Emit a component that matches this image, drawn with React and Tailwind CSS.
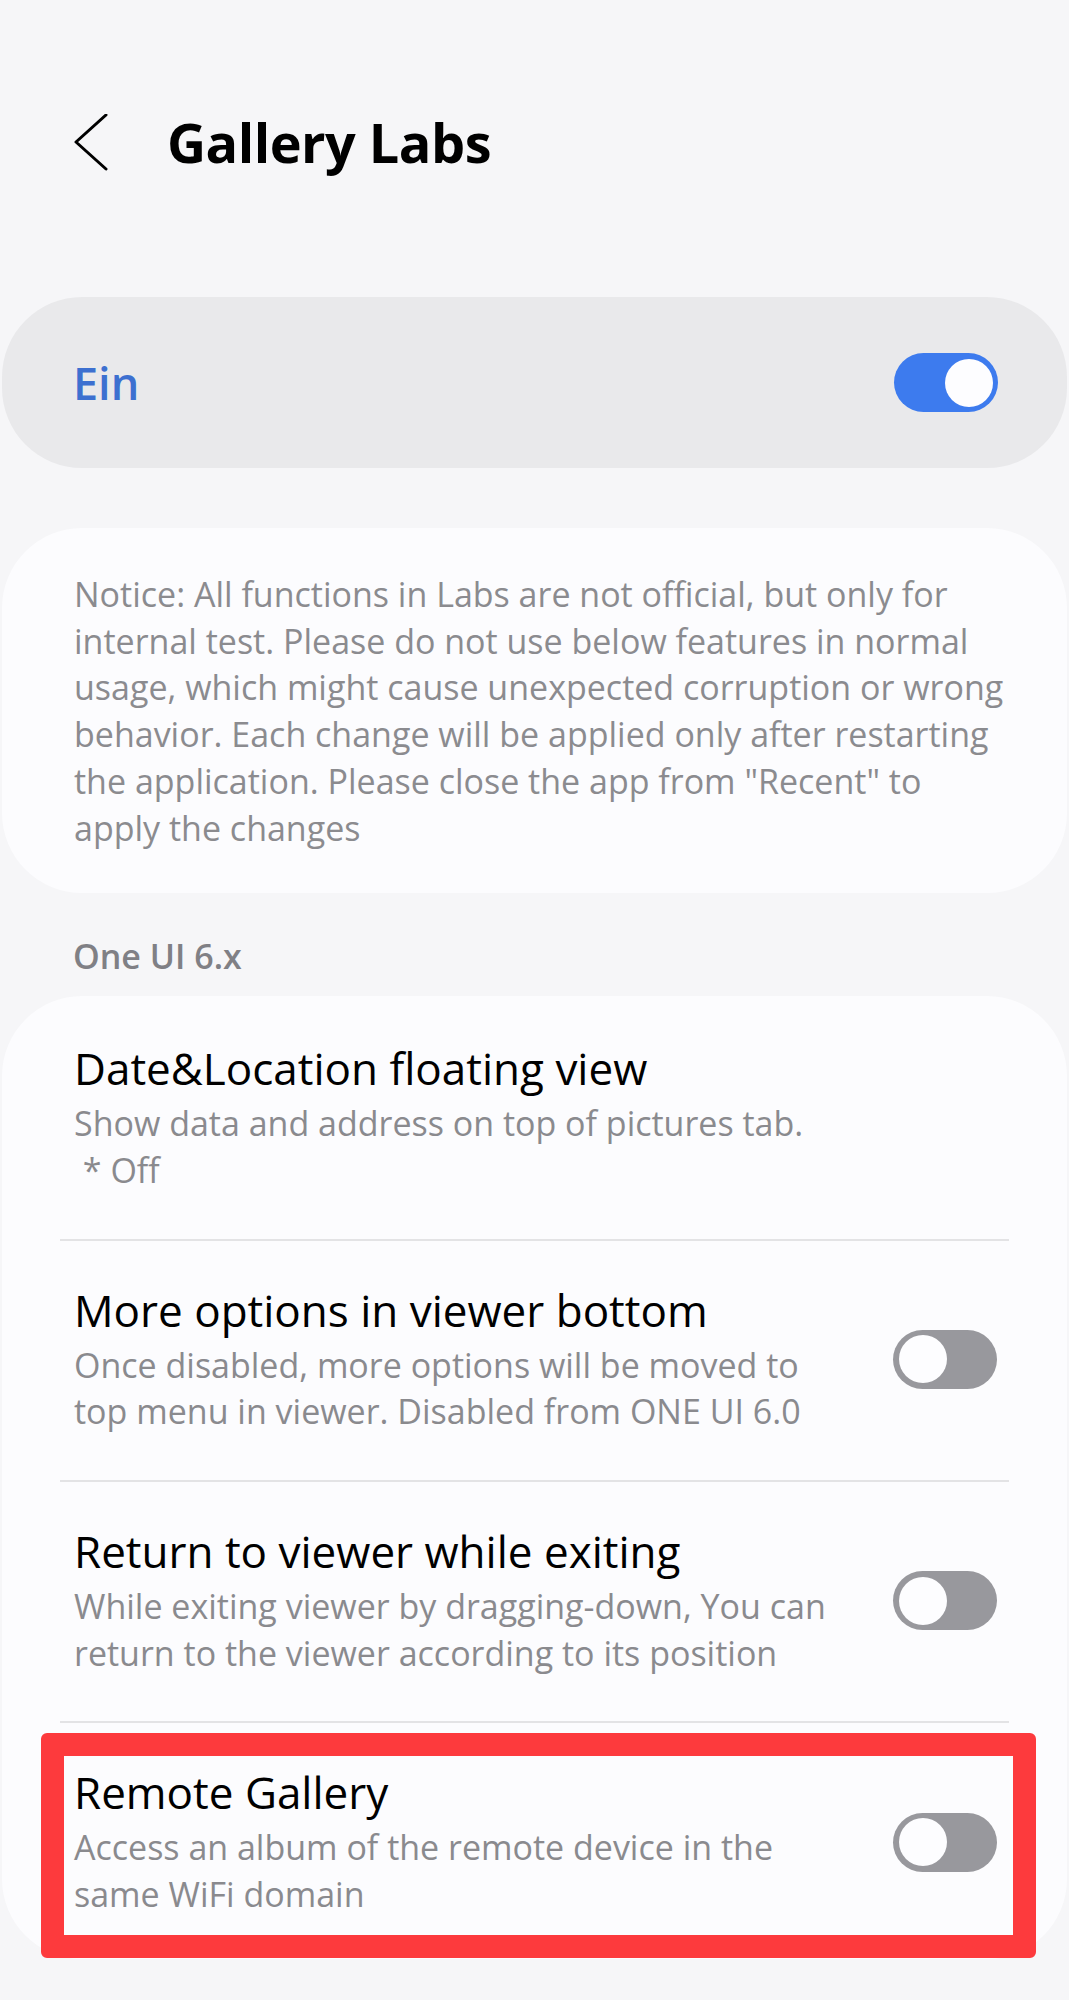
import React from 'react';

function Toggle({ on }) {
  if (on) {
    return (
      <div className="flex h-[59px] w-[104px] shrink-0 items-center justify-end rounded-full bg-[#3d7bee] pr-[5px]">
        <div className="h-[48px] w-[48px] rounded-full bg-[#fdfdff]" />
      </div>
    );
  }
  return (
    <div className="flex h-[59px] w-[104px] shrink-0 items-center rounded-full bg-[#98989d] pl-[6px]">
      <div className="h-[48px] w-[48px] rounded-full bg-[#fdfdff]" />
    </div>
  );
}

function Item({ title, lines, toggle, first, last }) {
  return (
    <div
      className={`flex items-center justify-between pl-[72px] pr-[70px] ${first ? 'pt-[46px]' : 'pt-[43px]'} ${
        last ? 'pb-[41px]' : 'pb-[45px]'
      }`}
    >
      <div>
        <div className="text-[44px] leading-[52px] text-black">{title}</div>
        <div className="mt-[6px] text-[34px] leading-[46.7px] text-[#8a8a8e]">
          {lines.map((l, i) => (
            <div key={i} className="whitespace-pre">{l}</div>
          ))}
        </div>
      </div>
      {toggle && <Toggle on={false} />}
    </div>
  );
}

export default function App() {
  return (
    <div className="min-h-screen w-[1069px] bg-[#f6f6f8] font-['Open_Sans','Noto_Sans',sans-serif] pb-[40px]">
      {/* header */}
      <div className="flex items-start pt-[114px] pl-[70px]">
        <svg width="40" height="60" viewBox="0 0 40 60" className="shrink-0">
          <path d="M36 1 L6 28 L36 55" fill="none" stroke="#000" strokeWidth="3" strokeLinejoin="round" strokeLinecap="round" />
        </svg>
        <h1 className="ml-[57px] text-[54px] leading-[56px] font-bold tracking-[-0.5px] text-black">Gallery Labs</h1>
      </div>

      {/* master switch */}
      <div className="mx-[2px] mt-[123px] flex h-[171px] items-center justify-between rounded-[80px] bg-[#e9e9eb] pl-[71px] pr-[69px]">
        <span className="text-[45px] font-semibold text-[#3d70d0]">Ein</span>
        <Toggle on />
      </div>

      {/* notice */}
      <div className="mx-[2px] mt-[60px] rounded-[80px] bg-[#fcfcfe] pl-[72px] pr-[20px] pt-[43px] pb-[42px] text-[34px] leading-[46.7px] text-[#8b8b8f]">
        Notice: All functions in Labs are not official, but only for<br />
        internal test. Please do not use below features in normal<br />
        usage, which might cause unexpected corruption or wrong<br />
        behavior. Each change will be applied only after restarting<br />
        the application. Please close the app from "Recent" to<br />
        apply the changes
      </div>

      {/* section */}
      <div className="mt-[43px] pl-[73px] text-[34px] leading-[40px] font-semibold text-[#808085]">One UI 6.x</div>

      <div className="relative mx-[2px] mt-[20px] rounded-[80px] bg-[#fcfcfe]">
        <Item
          first
          title="Date&Location floating view"
          lines={['Show data and address on top of pictures tab.', ' * Off']}
        />
        <div className="mx-[58px] h-[2px] bg-[#e3e3e5]" />
        <Item
          title="More options in viewer bottom"
          lines={['Once disabled, more options will be moved to', 'top menu in viewer. Disabled from ONE UI 6.0']}
          toggle
        />
        <div className="mx-[58px] h-[2px] bg-[#e3e3e5]" />
        <Item
          title="Return to viewer while exiting"
          lines={['While exiting viewer by dragging-down, You can', 'return to the viewer according to its position']}
          toggle
        />
        <div className="mx-[58px] h-[2px] bg-[#e3e3e5]" />
        <Item
          last
          title="Remote Gallery"
          lines={['Access an album of the remote device in the', 'same WiFi domain']}
          toggle
        />

        {/* highlight annotation */}
        <div className="pointer-events-none absolute left-[39px] top-[737px] h-[225px] w-[995px] rounded-[6px] border-[23px] border-[#fd3a3d]" />
      </div>
    </div>
  );
}
